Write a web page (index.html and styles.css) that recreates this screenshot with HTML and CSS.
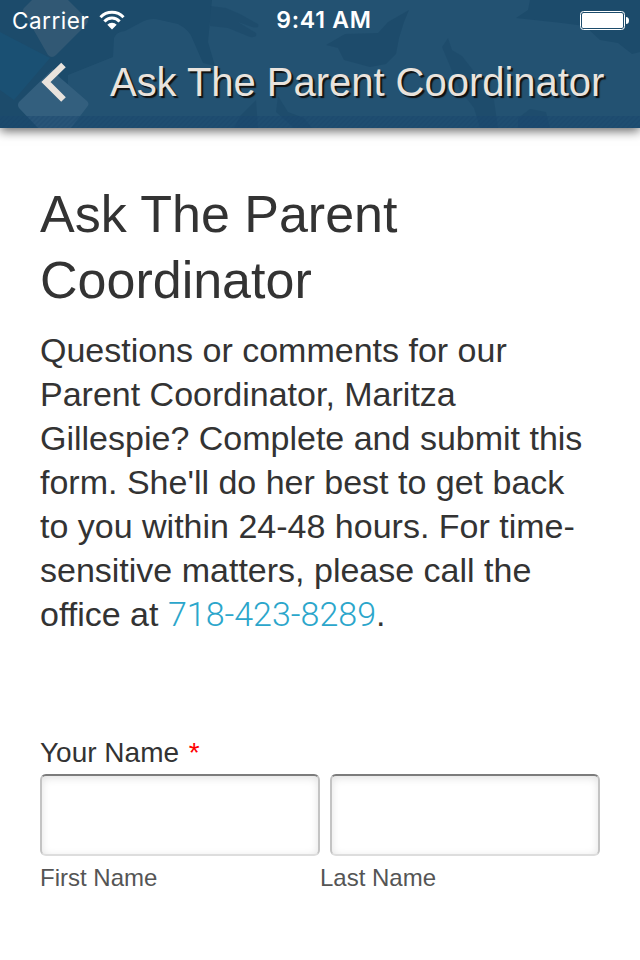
FILE: index.html
```html
<!DOCTYPE html>
<html lang="en">
<head>
  <meta charset="UTF-8" />
  <meta name="viewport" content="width=device-width, initial-scale=1.0" />
  <title>Ask The Parent Coordinator</title>
  <link rel="stylesheet" href="styles.css">
</head>
<body>
  <header class="header">
    <!-- Header artwork -->
    <svg class="header-bg" viewBox="0 0 640 128" aria-hidden="true">
      <defs>
        <pattern id="stripes" width="5" height="5" patternUnits="userSpaceOnUse">
          <path d="M-1 6L6 -1M-1 1L1 -1M4 6L6 4" stroke="#173f66" stroke-width="1.5" />
        </pattern>
      </defs>
      <rect width="640" height="128" fill="#1c4b6b" />
      <path d="M68 75L113 57L114 38Q116 32 125 31L140 23Q150 17 160 20L178 24Q190 30 193 40L203 63L215 66L208 42L212 0H530L528 10L516 18L562 23L585 26L600 40L618 43L632 54L640 52V128H68Z" fill="#235272" />
      <path d="M0 32L50 58L14 100L0 90Z" fill="#1a5073" />
      <g fill="#1c4a6a" opacity="0.65">
        <path d="M210 6L226 8L240 14L258 24Q260 29 252 27L238 22L256 33Q258 38 250 37L228 28L210 26Z" />
        <path d="M442 47L448 38L452 50L462 56L476 74L494 100L498 128H480L474 108L460 90Z" />
        <path d="M278 96L288 112L304 118L312 128H294L276 112ZM234 128L240 116L256 100L258 128ZM518 118L530 109L546 112L550 128H518Z" />
      </g>
      <path d="M326 45L345 34L378 33L388 22L409 10L404 22L399 38L396 54L386 64L370 67L344 60L338 48Z" fill="#1c4a6a" opacity="0.85" />
      <path d="M32 0L24 8Q22 10 24 13L48 55Q52 59 56 55L87 24Q89 21 87 19L68 0Z" fill="#315874" />
      <path d="M57 75L87 101Q90 104 87 107L71 128H38L19 108Q17 105 19 102L53 69Z" fill="#335f7e" />
      <rect y="116" width="640" height="12" fill="#1b4a70" opacity="0.45" />
      <rect y="116" width="640" height="12" fill="url(#stripes)" opacity="0.25" />
    </svg>

    <div class="status-bar">
      <div class="carrier">
        <span>Carrier</span>
        <svg class="wifi" width="26" height="20" viewBox="0 0 26 20">
          <path d="M1.500 7.200A16 16 0 0 1 24.500 7.200M5.400 11.400A10.300 10.300 0 0 1 20.600 11.400" fill="none" stroke="#fff" stroke-width="3" />
          <path d="M8.300 14.800A6.200 6.200 0 0 1 17.700 14.800L13 19.500Z" fill="#fff" />
        </svg>
      </div>
      <span class="clock">9:41 AM</span>
      <svg class="battery" width="50" height="20" viewBox="0 0 50 20">
        <rect x="0.5" y="1.5" width="44" height="18" rx="3" fill="none" stroke="#fff" />
        <rect x="2" y="3" width="41" height="15" rx="1.5" fill="#fff" />
        <path d="M46 7Q49 7 49 10.500Q49 14 46 14Z" fill="#fff" />
      </svg>
    </div>

    <div class="nav-bar">
      <svg class="back" width="26" height="40" viewBox="0 0 26 40">
        <path d="M22.500 3L5 20L22.500 37.500" fill="none" stroke="#e9e3dd" stroke-width="6.500" />
      </svg>
      <div class="nav-title">Ask The Parent Coordinator</div>
    </div>
  </header>

  <main class="content">
    <h1>Ask The Parent Coordinator</h1>
    <p class="intro">Questions or comments for our Parent Coordinator, Maritza Gillespie? Complete and submit this form. She'll do her best to get back to you within 24-48 hours. For time-sensitive matters, please call the office at <a href="tel:718-423-8289">718-423-8289</a>.</p>

    <form>
      <label class="label" for="first">Your Name <span class="required">*</span></label>
      <div class="inputs">
        <input type="text" id="first" name="first" />
        <input type="text" id="last" name="last" />
      </div>
      <div class="hints">
        <label for="first">First Name</label>
        <label for="last">Last Name</label>
      </div>
    </form>
  </main>
</body>
</html>
```
FILE: styles.css
```css
* { box-sizing: border-box; margin: 0; padding: 0; }
body { font-family: "Liberation Sans", Arial, sans-serif; color: #333; background-color: #fff; height: 960px; overflow: hidden; }

.header { position: relative; height: 128px; background-color: #1b4867; box-shadow: 0 3px 10px rgba(0, 0, 0, 0.6); }
.header-bg { position: absolute; top: 0; left: 0; width: 640px; height: 128px; }

.status-bar { position: relative; height: 40px; display: grid; grid-template-columns: 1fr auto 1fr; align-items: center; padding: 0 10px 0 12px; font-family: Inter, sans-serif; font-size: 22.5px; color: #fff; }
.carrier { display: flex; align-items: center; gap: 10px; letter-spacing: 0.5px; }
.clock { position: relative; left: 3px; font-weight: 600; font-size: 23px; letter-spacing: 0.8px; }
.battery { justify-self: end; }

.nav-bar { position: relative; height: 88px; display: flex; align-items: center; padding: 0 0 4px 41px; }
.back { flex: none; }
.nav-title { margin-left: 43px; font-size: 40px; line-height: 48px; letter-spacing: -0.03px; white-space: nowrap; color: #e9e3dd; text-shadow: 2px 2px 1px #111; }

.content { padding: 53px 40px 0; }
h1 { font-size: 52px; line-height: 66px; font-weight: normal; margin-bottom: 15px; }
.intro { font-size: 34px; line-height: 44px; }
.intro a { font-family: Roboto, sans-serif; font-weight: 300; color: #2ba6cb; text-decoration: none; }

form { margin-top: 99px; }
.label { display: block; height: 39px; font-size: 28px; line-height: 36px; }
.required { color: #f00; margin-left: 2px; }
.inputs { display: flex; gap: 10px; }
input { width: 280px; height: 82px; border: 2px solid #c3c3c3; border-top-color: #7c7c7c; border-bottom-color: #ddd; border-radius: 6px; background-color: #fff; box-shadow: inset 0 2px 8px rgba(0, 0, 0, 0.12); }
input + input { width: 270px; }
.hints { display: flex; margin-top: 8px; font-size: 24px; line-height: 28px; color: #555; }
.hints label { width: 280px; }
```
